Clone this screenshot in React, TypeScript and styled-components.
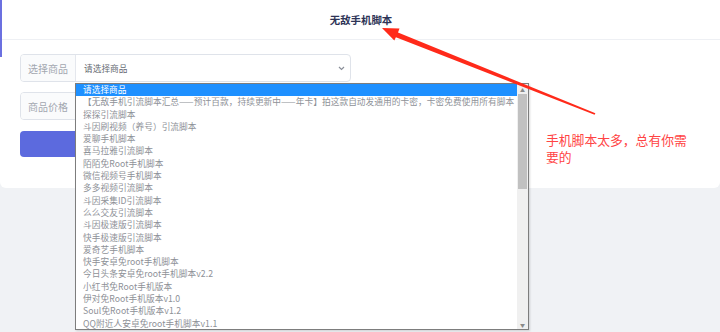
import styled, { createGlobalStyle } from "styled-components";

const GlobalStyle = createGlobalStyle`
  html, body {
    margin: 0;
    padding: 0;
    background: #f0f2f5;
  }
  body {
    font-family: "Noto Sans CJK SC", "Noto Sans", "Liberation Sans", sans-serif;
  }
`;

const products = [
  "请选择商品",
  "【无敌手机引流脚本汇总——预计百款，持续更新中——年卡】拍这款自动发通用的卡密，卡密免费使用所有脚本",
  "探探引流脚本",
  "斗因刷视频（养号）引流脚本",
  "爱聊手机脚本",
  "喜马拉雅引流脚本",
  "陌陌免Root手机脚本",
  "微信视频号手机脚本",
  "多多视频引流脚本",
  "斗因采集ID引流脚本",
  "么么交友引流脚本",
  "斗因极速版引流脚本",
  "快手极速版引流脚本",
  "爱奇艺手机脚本",
  "快手安卓免root手机脚本",
  "今日头条安卓免root手机脚本v2.2",
  "小红书免Root手机版本",
  "伊对免Root手机版本v1.0",
  "Soul免Root手机版本v1.2",
  "QQ附近人安卓免root手机脚本v1.1",
];

const Page = styled.div`
  position: relative;
  width: 720px;
  height: 332px;
  overflow: hidden;
  background: #f0f2f5;
`;

const Card = styled.div`
  position: relative;
  background: #fff;
  border-radius: 0 0 6px 6px;
  height: 188px;
  box-sizing: border-box;

  &::before {
    content: "";
    position: absolute;
    left: 0;
    top: 0;
    width: 2px;
    height: 57px;
    background: #6b70e0;
  }
`;

const Header = styled.div`
  height: 40px;
  border-bottom: 1px solid #eef0f4;
  box-sizing: border-box;
  display: flex;
  align-items: center;
  justify-content: center;
`;

const Title = styled.h1`
  margin: 0 0 0 2px;
  font-size: 10.4px;
  font-weight: 700;
  color: #2d3356;
`;

const Form = styled.div`
  padding: 14px 20px 0 20px;
  width: 331px;
  display: flex;
  flex-direction: column;
  gap: 10px;
`;

const InputGroup = styled.div`
  display: flex;
  height: 28px;
  border: 1px solid #dfe3ea;
  border-radius: 4px;
  box-sizing: border-box;
  overflow: hidden;
`;

const Addon = styled.div`
  width: 54px;
  flex: none;
  display: flex;
  align-items: center;
  justify-content: center;
  font-size: 10px;
  color: #a3a7b0;
  background: #fafbfc;
  border-right: 1px solid #e4e7ed;
`;

const SelectBox = styled.div`
  flex: 1;
  display: flex;
  align-items: center;
  justify-content: space-between;
  padding: 0 5px 0 8px;
  font-size: 8.7px;
  color: #666a72;
`;

const Chevron = styled.svg`
  width: 7px;
  height: 5px;
`;

const SubmitButton = styled.div`
  margin-top: 1px;
  height: 26px;
  border-radius: 4px;
  background: #5c6ade;
`;

const Listbox = styled.div`
  position: absolute;
  left: 75px;
  top: 83px;
  width: 454px;
  height: 247px;
  border: 1px solid #7d7d7d;
  box-sizing: border-box;
  background: #fff;
  display: flex;
  box-shadow: 1px 1px 2px rgba(0, 0, 0, 0.15);
`;

const Options = styled.div`
  flex: 1;
  overflow: hidden;
`;

const Option = styled.div<{ $active?: boolean }>`
  height: 12.3px;
  line-height: 12.3px;
  padding-left: 7px;
  font-size: 8.7px;
  white-space: nowrap;
  letter-spacing: ${(p) => (p.$active ? "0" : "0.05px")};
  color: ${(p) => (p.$active ? "#fff" : "#8e9197")};
  background: ${(p) => (p.$active ? "#1e90ff" : "transparent")};
`;

const Track = styled.div`
  width: 11px;
  flex: none;
  background: #f0f0f0;
  display: flex;
  flex-direction: column;
  align-items: center;
`;

const ArrowBtn = styled.div`
  height: 10px;
  width: 100%;
  display: flex;
  align-items: center;
  justify-content: center;
  font-size: 5px;
  color: #8a8a8a;
`;

const Thumb = styled.div`
  width: 9px;
  height: 95px;
  background: #c1c1c1;
`;

const Spacer = styled.div`
  flex: 1;
`;

const Note = styled.div`
  position: absolute;
  left: 546px;
  top: 131px;
  width: 148px;
  font-size: 12.8px;
  line-height: 17px;
  color: #ff4444;
`;

const ArrowLayer = styled.svg`
  position: absolute;
  left: 0;
  top: 0;
  pointer-events: none;
`;

export default function App() {
  return (
    <>
      <GlobalStyle />
      <Page>
        <Card>
          <Header>
            <Title>无敌手机脚本</Title>
          </Header>
          <Form>
            <InputGroup>
              <Addon>选择商品</Addon>
              <SelectBox>
                请选择商品
                <Chevron viewBox="0 0 7 5">
                  <path d="M1 1 L3.5 3.5 L6 1" fill="none" stroke="#8a8f99" strokeWidth="1.2" />
                </Chevron>
              </SelectBox>
            </InputGroup>
            <InputGroup>
              <Addon>商品价格</Addon>
              <SelectBox />
            </InputGroup>
            <SubmitButton />
          </Form>
        </Card>

        <Listbox>
          <Options>
            {products.map((name, i) => (
              <Option key={name} $active={i === 0}>
                {name}
              </Option>
            ))}
          </Options>
          <Track>
            <ArrowBtn>▲</ArrowBtn>
            <Thumb />
            <Spacer />
            <ArrowBtn>▼</ArrowBtn>
          </Track>
        </Listbox>

        <Note>手机脚本太多，总有你需要的</Note>

        <ArrowLayer width="720" height="332" viewBox="0 0 720 332">
          <polygon
            points="382,28 399.5,28.6 398,32.6 595.4,113.2 594.6,114.8 395.9,37.3 394.3,40.6"
            fill="#ff2a1a"
          />
        </ArrowLayer>
      </Page>
    </>
  );
}
